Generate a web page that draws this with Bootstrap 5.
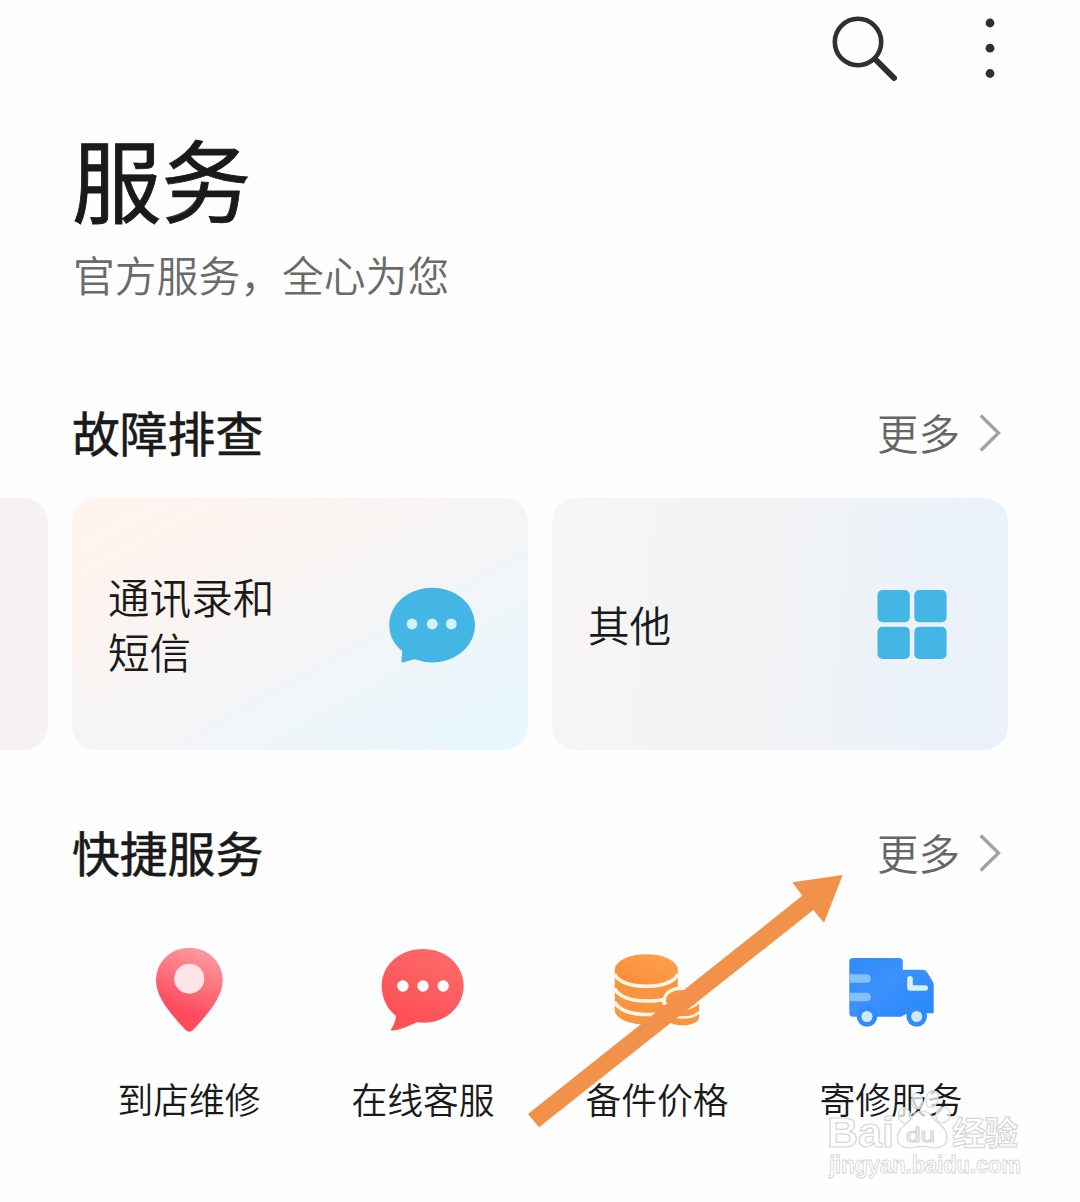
<!DOCTYPE html>
<html lang="zh-CN">
<head>
<meta charset="utf-8">
<meta name="viewport" content="width=device-width, initial-scale=1">
<title>服务</title>
<link href="https://cdn.jsdelivr.net/npm/bootstrap@5.3.0/dist/css/bootstrap.min.css" rel="stylesheet">
<style>
body{font-family:"Noto Sans CJK SC",sans-serif;color:#1a1a1a;background:#fefefe;width:1080px;height:1202px;overflow:hidden}
svg{display:block;flex:none}
.top-bar{height:96px;padding:12px 78px 0 0;gap:74px}
.page-title{font-size:89.5px;line-height:120px;font-weight:400;-webkit-text-stroke:.9px #1a1a1a;margin:21px 0 0;padding-left:72px}
.page-sub{font-size:41.8px;line-height:60px;font-weight:350;color:#6a6a6a;margin:7px 0 0;padding-left:73px}
.sec-head{height:60px;padding:0 72px 0 72px}
.sec-head h2{font-size:47.8px;line-height:60px;font-weight:400;-webkit-text-stroke:.6px #1a1a1a;margin:0 0 3px}
.more-link{font-size:41.5px;line-height:60px;font-weight:350;color:#666;text-decoration:none;gap:16px;margin-bottom:3px}
.more-link svg{margin-top:3px}
.strip{gap:24px;padding-right:72px;height:252px}
.topic{width:456px;flex:none;border-radius:24px;padding:0 45px 0 36px;font-size:41.6px;line-height:55px;font-weight:350}
.topic svg{margin-top:4px}
.topic-prev{background:#f6f1f3}
.topic-msg{background:linear-gradient(151deg,#fff3ee 8%,#f6f5f4 48%,#eff6fa 72%,#e6f8ff 100%)}
.topic-other{background:linear-gradient(96deg,#f8f5f6 0%,#f1f3f5 50%,#ebf2f9 80%,#ebf0fa 100%)}
.quick{padding:0 72px;margin-top:56px}
.quick-label{font-size:35.8px;line-height:50px;font-weight:350;margin-top:36px}
.overlay{left:0;top:0;pointer-events:none}
</style>
</head>
<body class="position-relative">
<header class="top-bar d-flex justify-content-end align-items-start">
  <svg width="76" height="72" viewBox="828 12 76 72" fill="none" stroke="#303030"><circle cx="858" cy="42" r="23.2" stroke-width="4.6"/><path d="M875 59 894 78" stroke-width="6" stroke-linecap="round"/></svg>
  <svg width="24" height="72" viewBox="978 12 24 72" fill="#303030"><circle cx="990" cy="23" r="4.4"/><circle cx="990" cy="48.2" r="4.4"/><circle cx="990" cy="73.5" r="4.4"/></svg>
</header>
<main>
  <h1 class="page-title">服务</h1>
  <p class="page-sub">官方服务，全心为您</p>

  <section style="margin-top:99px">
    <div class="sec-head d-flex justify-content-between align-items-center">
      <h2>故障排查</h2>
      <a class="more-link d-flex align-items-center" href="#">更多<svg width="32" height="44" viewBox="976 411 32 44" fill="none" stroke="#a2a2a2" stroke-width="3.4"><path d="M980.7 415.500 998.500 433 980.700 450.500"/></svg></a>
    </div>
    <div class="strip d-flex justify-content-end overflow-hidden" style="margin-top:35px">
      <div class="topic topic-prev"></div>
      <div class="topic topic-msg d-flex align-items-center justify-content-between">
        <div>通讯录和<br>短信</div>
        <svg width="96" height="96" viewBox="387 578 96 96"><path fill="#44b6e6" d="M432.200 587.700C456 587.700 475 604.200 475 625S456 662.500 432.200 662.500C425 662.500 420 660.500 414.500 659.200Q408.500 660.500 403.500 662.500 401 663 401.500 660.500L402.300 651C394 644.500 389.300 635.500 389.300 625 389.300 604.200 408.500 587.700 432.200 587.700Z"/><g fill="#d3f4ff"><circle cx="412" cy="624" r="5.400"/><circle cx="432.300" cy="624" r="5.400"/><circle cx="451.300" cy="624" r="5.400"/></g></svg>
      </div>
      <div class="topic topic-other d-flex align-items-center justify-content-between">
        <div>其他</div>
        <svg width="96" height="96" viewBox="867 578 96 96" fill="#44b6e6"><rect x="877.500" y="590" width="32.300" height="32.300" rx="5"/><rect x="914.300" y="590" width="32.300" height="32.300" rx="5"/><rect x="877.500" y="626.700" width="32.300" height="32.300" rx="5"/><rect x="914.300" y="626.700" width="32.300" height="32.300" rx="5"/></svg>
      </div>
    </div>
  </section>

  <section style="margin-top:73px">
    <div class="sec-head d-flex justify-content-between align-items-center">
      <h2>快捷服务</h2>
      <a class="more-link d-flex align-items-center" href="#">更多<svg width="32" height="44" viewBox="976 411 32 44" fill="none" stroke="#a2a2a2" stroke-width="3.4"><path d="M980.7 415.500 998.500 433 980.700 450.500"/></svg></a>
    </div>
    <div class="quick row g-0 text-center">
      <div class="col-3 d-flex flex-column align-items-center">
        <svg width="96" height="98" viewBox="141 939 96 98"><defs><linearGradient id="pinFill" x1=".65" y1="0" x2=".4" y2=".75"><stop offset="0" stop-color="#fc9ba0"/><stop offset="1" stop-color="#fe4c5d"/></linearGradient></defs><path fill="url(#pinFill)" d="M189.300 947.700C208 947.700 222.700 962 222.700 980.500 222.700 998 206 1016 193 1030Q189.300 1033.500 185.600 1030C172.500 1016 156 998 156 980.500 156 962 170.600 947.700 189.300 947.700Z"/><circle cx="189.300" cy="978.700" r="15" fill="#fee3e7"/></svg>
        <div class="quick-label">到店维修</div>
      </div>
      <div class="col-3 d-flex flex-column align-items-center">
        <svg width="96" height="98" viewBox="375 939 96 98"><defs><linearGradient id="chatFill" x1=".8" y1="0" x2=".3" y2=".9"><stop offset="0" stop-color="#fc6b6b"/><stop offset="1" stop-color="#fe4f55"/></linearGradient></defs><path fill="url(#chatFill)" d="M422.700 949C446 949 463.700 965 463.700 985.700S446 1022.700 424 1022.700L417 1022.300C408 1026.500 400 1030 391.500 1030.800L390.800 1029.800Q395.500 1023 396 1016C387 1008.500 381.700 998 381.700 985.700 381.700 965 400 949 422.700 949Z"/><g fill="#fff"><circle cx="402.900" cy="986" r="5.700"/><circle cx="423" cy="986" r="5.700"/><circle cx="443.200" cy="986" r="5.700"/></g></svg>
        <div class="quick-label">在线客服</div>
      </div>
      <div class="col-3 d-flex flex-column align-items-center">
        <svg width="96" height="98" viewBox="609 939 96 98"><defs><linearGradient id="coinFill" x1="0" y1="1" x2="1" y2="0"><stop offset="0" stop-color="#fb8a35"/><stop offset="1" stop-color="#fba353"/></linearGradient></defs>
          <path fill="#f9953f" d="M614.800 970H677.800V1010C677.800 1018 664 1024.500 646.300 1024.500S614.800 1018 614.800 1010Z"/><ellipse cx="646.300" cy="969.500" rx="31.500" ry="15.300" fill="url(#coinFill)"/>
          <g fill="none" stroke="#fff6e3" stroke-width="3.600"><path d="M614.500 974C618 981.500 630 986.300 646.300 986.300S675 981.500 678 974M614.500 988.500C618 996 630 1001 646.300 1001S662 1000 666 998.500M614.500 1001.500C618 1009.500 630 1014.500 646.300 1014.500S660 1013.500 666 1011"/></g>
          <path fill="#fff6e3" d="M662.500 1005C661.500 993 669 986.500 682 986.500V1005Z"/><path fill="#f9953f" d="M666 1000C666 994 673 990 682.500 990S699 995 699 1001V1017C699 1022 692 1025.300 682.500 1025.300S666 1022 666 1017Z"/><path fill="none" stroke="#fff6e3" stroke-width="2.600" d="M666 1003C669 1008 676 1009 682.500 1009S696 1006 699 1001.500M666 1012C669 1017 676 1017.500 682.500 1017.500S696 1016 699 1012"/></svg>
        <div class="quick-label">备件价格</div>
      </div>
      <div class="col-3 d-flex flex-column align-items-center">
        <svg width="96" height="98" viewBox="843 939 96 98"><defs><linearGradient id="truckFill" x1="0" y1="0" x2="1" y2="1"><stop offset="0" stop-color="#328bf5"/><stop offset=".45" stop-color="#3b91fe"/><stop offset="1" stop-color="#2688f8"/></linearGradient></defs><g fill="url(#truckFill)"><path d="M853 958H899Q902.800 958 902.800 962V969.700H923Q925.500 969.700 927 972L932.500 981Q933.700 983 933.700 985V1013.300H926L906 1014 901 1016.700H853Q849.300 1016.700 849.300 1013V962Q849.300 958 853 958Z"/></g><g fill="#2f8cf9"><circle cx="867" cy="1016.500" r="10.300"/><circle cx="916.700" cy="1016.500" r="10.300"/></g><path fill="#85c0ff" d="M849.300 974.200H866.700A4.250 4.250 0 0 1 866.700 982.700H849.300ZM849.300 992.700H866.700A4.250 4.250 0 0 1 866.700 1001.200H849.300Z"/><path fill="none" stroke="#d5f0ff" stroke-width="5.600" stroke-linecap="round" stroke-linejoin="round" d="M910 978.700V988H925.200"/><g fill="#cfeaff"><circle cx="867" cy="1016.500" r="5.500"/><circle cx="916.700" cy="1016.500" r="5.500"/></g></svg>
        <div class="quick-label">寄修服务</div>
      </div>
    </div>
  </section>
</main>

<!-- pointer arrow and site watermark lie over the page -->
<svg class="overlay position-absolute" width="1080" height="1202" viewBox="0 0 1080 1202">
  <path fill="#f29149" d="M528 1114 802.300 895.700 792.300 882.300 842.700 875 824 922.700 813.300 910 539 1127.300Z"/>
  <g fill="#fff" fill-opacity=".75" stroke="#d6d6d6" stroke-width="1.200" font-family="'Liberation Sans','Noto Sans CJK SC',sans-serif" font-weight="700">
    <text x="827" y="1147" font-size="42" textLength="67" lengthAdjust="spacingAndGlyphs">Bai</text>
    <ellipse cx="904.500" cy="1115.500" rx="6" ry="8" transform="rotate(-15 904.500 1115.500)"/><ellipse cx="917" cy="1101" rx="5.500" ry="8"/><ellipse cx="932" cy="1099" rx="6" ry="8.500" transform="rotate(12 932 1099)"/><ellipse cx="943" cy="1115" rx="7" ry="8" transform="rotate(20 943 1115)"/>
    <path d="M922 1111C930 1111 932 1118 938 1123 944 1128 948 1132 947 1139 946 1147 938 1149 931 1147.500 925 1146 920 1146 913 1147.500 904 1149 898 1146 897.500 1138 897 1130 904 1126 908 1122 913 1117 914 1111 922 1111Z"/>
    <text x="906" y="1142" font-size="21" font-weight="400" textLength="29" lengthAdjust="spacingAndGlyphs">du</text>
    <text x="952" y="1144.500" font-size="33.500" textLength="66" font-family="'Noto Sans CJK SC',sans-serif">经验</text>
    <text x="829" y="1172.500" font-size="23" font-weight="700" stroke-width=".9" textLength="192" lengthAdjust="spacingAndGlyphs">jingyan.baidu.com</text>
  </g>
</svg>
<script src="https://cdn.jsdelivr.net/npm/bootstrap@5.3.0/dist/js/bootstrap.bundle.min.js"></script>
</body>
</html>
